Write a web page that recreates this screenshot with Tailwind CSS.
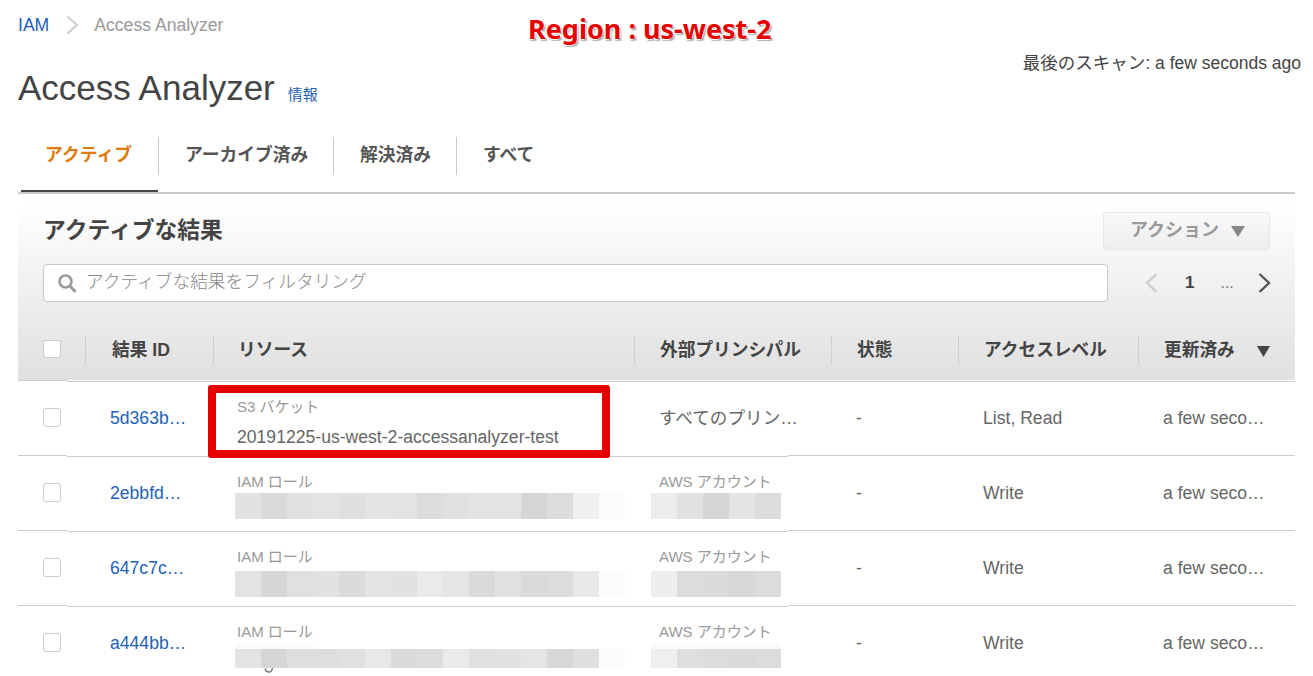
<!DOCTYPE html>
<html lang="ja">
  <head>
    <meta charset="UTF-8" />
    <title>Access Analyzer</title>
    <script src="https://cdn.jsdelivr.net/npm/@tailwindcss/browser@4"></script>
  </head>
  <body class="relative h-[676px] overflow-hidden bg-white px-[18px] font-['Liberation_Sans','Noto_Sans_CJK_JP',sans-serif] text-[#444]">
    <!-- パンくず -->
    <nav class="flex h-[50px] items-center text-[17.6px]">
      <span class="text-[#1d62b8]">IAM</span>
      <svg class="ml-[17px] mr-[15px] h-[20px] w-[13px]" viewBox="0 0 13 20" fill="none" stroke="#ccc" stroke-width="2"><path d="M1.5 1.5 11 10 1.5 18.5" /></svg>
      <span class="text-[#999]">Access Analyzer</span>
    </nav>

    <!-- タイトル -->
    <div class="flex h-[77px] justify-between">
      <div class="flex items-start pt-[14px]">
        <h1 class="text-[35px] leading-[48px]">Access Analyzer</h1>
        <a class="ml-[13px] mt-[21px] text-[15px] leading-[20px] text-[#1d62b8]">情報</a>
      </div>
      <div class="-mr-[6px] pt-[1px] text-[17.5px] leading-[24px]">最後のスキャン: a few seconds ago</div>
    </div>

    <!-- タブ -->
    <div class="flex h-[67px] border-b-2 border-[#ccc] pl-[3px] text-[17.8px] font-bold text-[#555]">
      <div class="w-[137px] border-b-2 border-[#444] pt-[10px]">
        <div class="flex h-[38px] items-center pb-[2px] pl-[24px] text-[#df7a0e]">アクティブ</div>
      </div>
      <div class="w-[175px] pt-[10px]">
        <div class="flex h-[38px] items-center border-l border-[#ccc] pb-[2px] pl-[26px]">アーカイブ済み</div>
      </div>
      <div class="w-[123px] pt-[10px]">
        <div class="flex h-[38px] items-center border-l border-[#ccc] pb-[2px] pl-[26px]">解決済み</div>
      </div>
      <div class="pt-[10px]">
        <div class="flex h-[38px] items-center border-l border-[#ccc] pb-[2px] pl-[26px]">すべて</div>
      </div>
    </div>

    <!-- 結果パネル -->
    <section class="bg-linear-to-b from-white from-[5%] to-[#e0e0e0]">
      <div class="flex items-start justify-between pl-[25px] pr-[25px] pt-[18px]">
        <h2 class="text-[22.800px] font-bold leading-[36px]">アクティブな結果</h2>
        <button class="flex h-[38px] w-[167px] items-center rounded-[3px] border border-[#e8e8e8] bg-linear-to-b from-[#fafafa] to-[#ededed] pb-[2px] pl-[26px] text-[18px] font-bold text-[#999]">
          アクション
          <svg class="ml-[12px] mt-[2px] h-[11px] w-[14px]" viewBox="0 0 14 11" fill="#888"><path d="M0 0h14L7 11z" /></svg>
        </button>
      </div>

      <div class="mt-[14px] flex pl-[25px]">
        <div class="flex h-[38px] w-[1065px] items-center rounded-[4px] border border-[#c8c8c8] bg-white pl-[13px] text-[17.7px] text-[#888]">
          <svg class="h-[20px] w-[20px]" viewBox="0 0 20 20" fill="none" stroke="#9a9a9a" stroke-width="2.6"><circle cx="8.5" cy="8.5" r="6" /><path d="m13 13 5.5 6" /></svg>
          <span class="ml-[9px] pb-[2px] font-light">アクティブな結果をフィルタリング</span>
        </div>
        <div class="flex h-[38px] flex-1 items-center pl-[37px] text-[#444]">
          <svg class="h-[20px] w-[13px]" viewBox="0 0 13 20" fill="none" stroke="#ccc" stroke-width="2.4"><path d="M11.5 1 2 10l9.5 9" /></svg>
          <span class="ml-[27px] text-[17px] font-bold">1</span>
          <span class="ml-[26px] text-[16px] leading-[16px] text-[#777]">...</span>
          <svg class="ml-[24px] h-[20px] w-[13px]" viewBox="0 0 13 20" fill="none" stroke="#555" stroke-width="2.4"><path d="M1.5 1 11 10l-9.5 9" /></svg>
        </div>
      </div>

      <!-- 列ヘッダー -->
      <div class="grid h-[78px] grid-cols-[67px_128px_421px_197px_127px_180px_157px] pt-[34px] text-[17.7px] font-bold">
        <div class="pl-[25px] pt-[4px]"><div class="h-[18px] w-[18px] rounded-[3px] border border-[#ccc] bg-white"></div></div>
        <div class="flex h-[29px] items-center border-l border-[#cfcfcf] pl-[26px]">結果 ID</div>
        <div class="flex h-[29px] items-center border-l border-[#cfcfcf] pl-[24px]">リソース</div>
        <div class="flex h-[29px] items-center border-l border-[#cfcfcf] pl-[25px]">外部プリンシパル</div>
        <div class="flex h-[29px] items-center border-l border-[#cfcfcf] pl-[25px]">状態</div>
        <div class="flex h-[29px] items-center border-l border-[#cfcfcf] pl-[25px]">アクセスレベル</div>
        <div class="flex h-[29px] items-center border-l border-[#cfcfcf] pl-[25px]">更新済み
          <svg class="ml-[22px] mt-[2px] h-[11px] w-[13px]" viewBox="0 0 13 11" fill="#444"><path d="M0 0h13L6.5 11z" /></svg>
        </div>
      </div>
    </section>

    <div class="flex h-[2px]"><div class="h-px w-[49px] bg-[#ccc]"></div><div class="mt-px h-px flex-1 bg-[#ccc]"></div></div>

    <!-- 行 1 -->
    <div class="grid h-[73px] grid-cols-[67px_128px_421px_197px_127px_180px_157px] items-center pb-[2px] text-[17.6px] leading-[20px] text-[#666]">
      <div class="pl-[25px]"><div class="h-[19px] w-[18px] rounded-[3px] border border-[#ccc]"></div></div>
      <div class="pl-[25px] text-[#1d62b8]">5d363b…</div>
      <div class="self-start pl-[24px] pt-[15px]">
        <div class="text-[15px] text-[#999]">S3 バケット</div>
        <div class="mt-[10px]">20191225-us-west-2-accessanalyzer-test</div>
      </div>
      <div class="pl-[25px]">すべてのプリン…</div>
      <div class="pl-[25px]">-</div>
      <div class="pl-[25px]">List, Read</div>
      <div class="pl-[25px]">a few seco…</div>
    </div>
    <div class="flex h-[2px]"><div class="h-px w-[49px] bg-[#ccc]"></div><div class="mt-px h-px w-[721px] bg-[#ccc]"></div><div class="h-px flex-1 bg-[#ccc]"></div></div>

    <!-- 行 2 -->
    <div class="grid h-[73px] grid-cols-[67px_128px_421px_197px_127px_180px_157px] items-center pb-[2px] text-[17.6px] leading-[20px] text-[#666]">
      <div class="pl-[25px]"><div class="h-[19px] w-[18px] rounded-[3px] border border-[#ccc]"></div></div>
      <div class="pl-[25px] text-[#1d62b8]">2ebbfd…</div>
      <div class="self-start pl-[22px] pt-[15px]">
        <div class="pl-[2px] text-[15px] text-[#999]">IAM ロール</div>
        <div class="mt-[1px] flex h-[26px] *:w-[26px]">
          <div class="bg-[#e2e2e2]"></div><div class="bg-[#d9d9d8]"></div><div class="bg-[#dfe1e0]"></div><div class="bg-[#e2e3e2]"></div><div class="bg-[#dfdfdf]"></div><div class="bg-[#e3e4e3]"></div><div class="bg-[#e2e3e3]"></div><div class="bg-[#dcdcdb]"></div><div class="bg-[#e0e0e0]"></div><div class="bg-[#e3e3e3]"></div><div class="bg-[#e3e3e3]"></div><div class="bg-[#d5d5d5]"></div><div class="bg-[#dcdddc]"></div><div class="bg-[#f0f0f0]"></div><div class="bg-[#fcfcfc]"></div>
        </div>
      </div>
      <div class="self-start pl-[17px] pt-[15px]">
        <div class="pl-[8px] text-[15px] text-[#999]">AWS アカウント</div>
        <div class="mt-[1px] flex h-[26px] *:w-[26px]">
          <div class="bg-[#ededed]"></div><div class="bg-[#e1e1df]"></div><div class="bg-[#d6d6d6]"></div><div class="bg-[#e4e4e4]"></div><div class="bg-[#dddddd]"></div>
        </div>
      </div>
      <div class="pl-[25px]">-</div>
      <div class="pl-[25px]">Write</div>
      <div class="pl-[25px]">a few seco…</div>
    </div>
    <div class="flex h-[2px]"><div class="h-px w-[49px] bg-[#ccc]"></div><div class="mt-px h-px w-[721px] bg-[#ccc]"></div><div class="h-px flex-1 bg-[#ccc]"></div></div>

    <!-- 行 3 -->
    <div class="grid h-[73px] grid-cols-[67px_128px_421px_197px_127px_180px_157px] items-center pb-[2px] text-[17.6px] leading-[20px] text-[#666]">
      <div class="pl-[25px]"><div class="h-[19px] w-[18px] rounded-[3px] border border-[#ccc]"></div></div>
      <div class="pl-[25px] text-[#1d62b8]">647c7c…</div>
      <div class="self-start pl-[22px] pt-[15px]">
        <div class="pl-[2px] text-[15px] text-[#999]">IAM ロール</div>
        <div class="mt-[4px] flex h-[26px] *:w-[26px]">
          <div class="bg-[#e3e3e3]"></div><div class="bg-[#d6d6d6]"></div><div class="bg-[#dfe0df]"></div><div class="bg-[#e1e2e1]"></div><div class="bg-[#dbdbdb]"></div><div class="bg-[#e4e4e4]"></div><div class="bg-[#e2e2e2]"></div><div class="bg-[#eaeaea]"></div><div class="bg-[#e5e5e3]"></div><div class="bg-[#d9d9d9]"></div><div class="bg-[#e1e1e1]"></div><div class="bg-[#dadada]"></div><div class="bg-[#dcdcdc]"></div><div class="bg-[#e8e9e8]"></div><div class="bg-[#fbfbfb]"></div>
        </div>
      </div>
      <div class="self-start pl-[17px] pt-[15px]">
        <div class="pl-[8px] text-[15px] text-[#999]">AWS アカウント</div>
        <div class="mt-[4px] flex h-[26px] *:w-[26px]">
          <div class="bg-[#eeeeee]"></div><div class="bg-[#dcdcdc]"></div><div class="bg-[#dadada]"></div><div class="bg-[#d8d8d8]"></div><div class="bg-[#dcdcdc]"></div>
        </div>
      </div>
      <div class="pl-[25px]">-</div>
      <div class="pl-[25px]">Write</div>
      <div class="pl-[25px]">a few seco…</div>
    </div>
    <div class="flex h-[2px]"><div class="h-px w-[49px] bg-[#ccc]"></div><div class="mt-px h-px w-[721px] bg-[#ccc]"></div><div class="h-px flex-1 bg-[#ccc]"></div></div>

    <!-- 行 4 -->
    <div class="grid h-[73px] grid-cols-[67px_128px_421px_197px_127px_180px_157px] items-center pb-[2px] text-[17.6px] leading-[20px] text-[#666]">
      <div class="pl-[25px]"><div class="h-[19px] w-[18px] rounded-[3px] border border-[#ccc]"></div></div>
      <div class="pl-[25px] text-[#1d62b8]">a444bb…</div>
      <div class="self-start pl-[22px] pt-[15px]">
        <div class="pl-[2px] text-[15px] text-[#999]">IAM ロール</div>
        <div class="mt-[2px] h-[5px] w-[78px] bg-[#fafafa]"></div>
        <div class="flex h-[19px] *:w-[26px]">
          <div class="bg-[#e4e4e2]"></div><div class="bg-[#d6d6d6]"></div><div class="bg-[#dedede]"></div><div class="bg-[#dedede]"></div><div class="bg-[#e0e0de]"></div><div class="bg-[#e8e8e8]"></div><div class="bg-[#dbdbd9]"></div><div class="bg-[#dcdcda]"></div><div class="bg-[#eaeaea]"></div><div class="bg-[#e0e0e0]"></div><div class="bg-[#e2e2e2]"></div><div class="bg-[#e5e5e5]"></div><div class="bg-[#d8d8d6]"></div><div class="bg-[#dfdfdf]"></div><div class="bg-[#fcfcfc]"></div>
        </div>
        <svg class="ml-[29px] h-[6px] w-[10px]" viewBox="0 0 10 6" fill="none" stroke="#777" stroke-width="1.3"><path d="M1 0.5c.5 2.5 2 3.5 4 3.5s3-1.5 3.500-4" /></svg>
      </div>
      <div class="self-start pl-[17px] pt-[15px]">
        <div class="pl-[8px] text-[15px] text-[#999]">AWS アカウント</div>
        <div class="mt-[2px] h-[5px] w-[130px] bg-[#fafafa]"></div>
        <div class="flex h-[19px] *:w-[26px]">
          <div class="bg-[#efefef]"></div><div class="bg-[#dfdfdf]"></div><div class="bg-[#dcdcdc]"></div><div class="bg-[#dadada]"></div><div class="bg-[#dcdcdc]"></div>
        </div>
      </div>
      <div class="pl-[25px]">-</div>
      <div class="pl-[25px]">Write</div>
      <div class="pl-[25px]">a few seco…</div>
    </div>

    <!-- 注釈 -->
    <div class="absolute left-[528px] top-[9px] whitespace-nowrap font-['Noto_Sans',sans-serif] text-[27px] font-bold leading-[40px] text-[#e60000] [text-shadow:-1px_-1px_0_#fff,1px_-1px_0_#fff,-1px_1px_0_#fff,1px_1px_0_#aaa,2px_2px_1px_#bbb,0_2px_0_#bbb]">Region : us-west-2</div>
    <div class="absolute left-[208px] top-[385px] h-[73px] w-[402px] rounded-[3px] border-[8px] border-[#e60000]"></div>
  </body>
</html>
